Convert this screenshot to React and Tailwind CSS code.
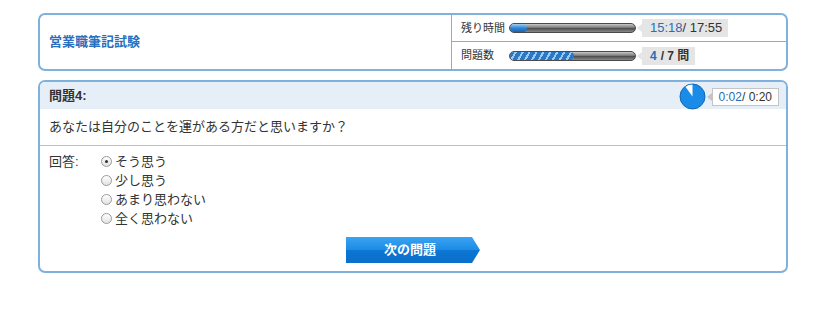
const jp = { fontFamily: '"Liberation Sans", "Noto Sans CJK JP", sans-serif' };

const Bar = ({ fill, striped }) => (
    <div className="relative w-[127px] h-[10px] rounded-full border border-[#4a4a4a] bg-[linear-gradient(#c9c9c9,#7a7a7a_45%,#4f4f4f_55%,#8a8a8a)] overflow-hidden">
        <div
            className={
                striped
                    ? 'h-full rounded-full bg-[repeating-linear-gradient(120deg,#2c78c8_0px,#2c78c8_4px,#9ccbf2_4px,#9ccbf2_6px)]'
                    : 'h-full rounded-full bg-[linear-gradient(#9fd0f5,#2f86d6_50%,#1d64b0)]'
            }
            style={{ width: fill }}
        />
    </div>
);

const ValueTag = ({ children, width }) => (
    <div className={`relative ml-[6px] h-[18px] bg-[#e5e5e5] flex items-center pl-[8px] ${width}`}>
        <span className="absolute left-[-5px] top-[5px] w-0 h-0 border-y-[4px] border-y-transparent border-r-[5px] border-r-[#e5e5e5]" />
        {children}
    </div>
);

const Radio = ({ checked }) => (
    <span className="w-[11px] h-[11px] rounded-full border border-[#9a9a9a] bg-[linear-gradient(#ffffff,#e2e2e2)] flex items-center justify-center mr-[3px]">
        {checked && <span className="w-[3px] h-[3px] rounded-full bg-[#333]" />}
    </span>
);

const Pie = () => (
    <svg width="27" height="27" viewBox="0 0 27 27">
        <circle cx="13.5" cy="13.5" r="12.5" fill="#1a8be6" stroke="#1464b4" strokeWidth="1" />
        <path d="M13.5,13.5 L13.5,1.5 A12,12 0 0 0 6.45,3.8 Z" fill="#ffffff" />
    </svg>
);

const answers = ['そう思う', '少し思う', 'あまり思わない', '全く思わない'];

export default function App() {
    return (
        <div className="w-[826px] h-[317px] bg-white pt-[13px] px-[38px] text-[#333]" style={jp}>
            {/* Header */}
            <div className="flex h-[58px] border-2 border-[#80b1dd] rounded-[7px]">
                <div className="w-[412px] border-r border-[#80b1dd] flex items-center pl-[9px]">
                    <h1 className="text-[13px] font-bold text-[#2a6fbd]">営業職筆記試験</h1>
                </div>
                <div className="flex-1 flex flex-col">
                    <div className="h-[27px] border-b border-[#80b1dd] flex items-center pl-[9px]">
                        <span className="w-[48px] text-[11px]">残り時間</span>
                        <Bar fill="17px" />
                        <ValueTag width="w-[86px]">
                            <span className="text-[13px] font-medium text-[#2a6db5]">15:18</span>
                            <span className="text-[13px] font-medium">/ 17:55</span>
                        </ValueTag>
                    </div>
                    <div className="flex-1 flex items-center pl-[9px]">
                        <span className="w-[48px] text-[11px]">問題数</span>
                        <Bar fill="64px" striped />
                        <ValueTag width="w-[53px]">
                            <span className="text-[12px] font-bold text-[#2a6db5]">4</span>
                            <span className="text-[12px] font-bold ml-[4px]">/ 7 問</span>
                        </ValueTag>
                    </div>
                </div>
            </div>

            {/* Question */}
            <div className="mt-[9px] h-[193px] border-2 border-[#80b1dd] rounded-[7px] overflow-hidden flex flex-col">
                <div className="h-[27px] bg-[#e6eff8] flex items-center justify-between pl-[9px] pr-[7px]">
                    <span className="text-[13px] font-bold">問題4:</span>
                    <div className="flex items-center mt-[2px]">
                        <Pie />
                        <div className="relative ml-[6px] h-[18px] border border-[#c4c4c4] bg-white flex items-center px-[6px] text-[12px]">
                            <span className="absolute left-[-6px] top-[4px] w-0 h-0 border-y-[4px] border-y-transparent border-r-[5px] border-r-[#c4c4c4]" />
                            <span className="text-[#2a6db5]">0:02</span>
                            <span>/ 0:20</span>
                        </div>
                    </div>
                </div>
                <div className="h-[37px] border-b border-[#a8c6e3] flex items-center pl-[9px] text-[13px]">
                    あなたは自分のことを運がある方だと思いますか？
                </div>
                <div className="flex-1 flex flex-col pt-[6px] pl-[9px]">
                    <div className="flex text-[13px] leading-[19px]">
                        <span className="w-[52px]">回答:</span>
                        <div className="flex flex-col">
                            {answers.map((a, i) => (
                                <label key={a} className="flex items-center">
                                    <Radio checked={i === 0} />
                                    {a}
                                </label>
                            ))}
                        </div>
                    </div>
                    <div className="flex justify-center mt-[9px] pr-[9px]">
                        <button className="w-[134px] h-[26px] pr-[6px] text-white text-[13px] font-bold bg-[linear-gradient(#3aa4f2,#1d8ae6_50%,#0b76d4_52%,#0a6fc8)] [clip-path:polygon(0_0,calc(100%-8px)_0,100%_50%,calc(100%-8px)_100%,0_100%)]">
                            次の問題
                        </button>
                    </div>
                </div>
            </div>
        </div>
    );
}
